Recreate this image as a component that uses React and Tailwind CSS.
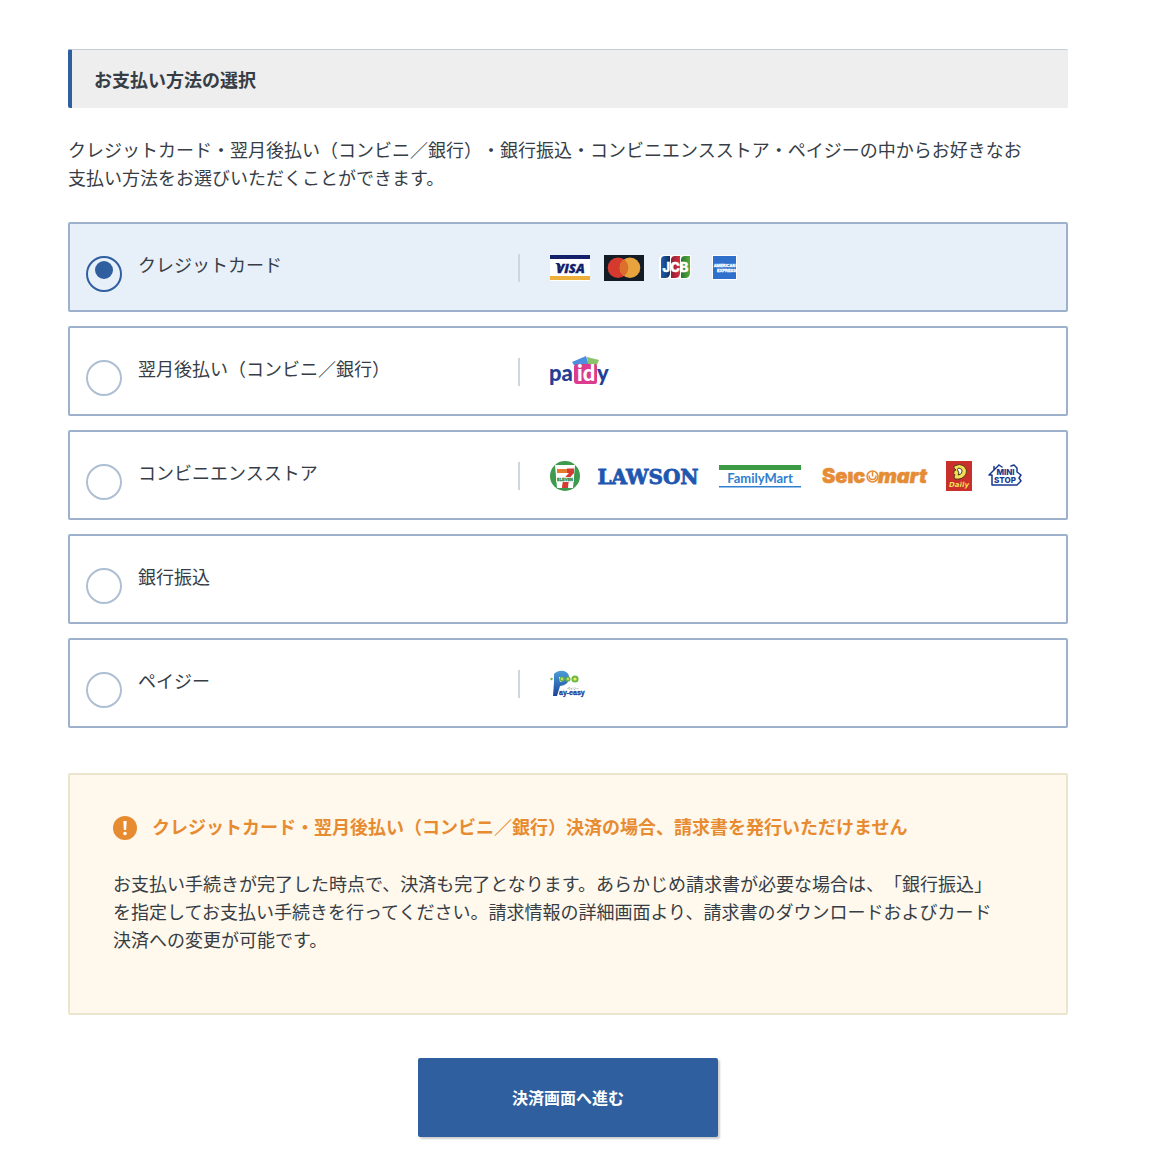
import React, { useState } from "react";

function Visa() {
  return (
    <svg width="40" height="26" viewBox="0 0 40 26" role="img" aria-label="VISA">
      <rect width="40" height="26" fill="#fff" />
      <rect width="40" height="4" fill="#14206b" />
      <rect y="21" width="40" height="4" fill="#edb13b" />
      <path d="M5 8h4l2 4-1 2C9 11 7 9 5 8z" fill="#14206b" />
      <text x="20.5" y="17.500" textAnchor="middle" fontFamily="Open Sans, sans-serif" fontSize="13" fontWeight="800" fontStyle="italic" fill="#14206b" stroke="#14206b" strokeWidth="0.300">VISA</text>
    </svg>
  );
}

function Mastercard() {
  return (
    <svg width="40" height="26" viewBox="0 0 40 26" role="img" aria-label="Mastercard">
      <rect width="40" height="26" fill="#131c26" />
      <circle cx="14" cy="12.7" r="10.3" fill="#d63a2f" />
      <circle cx="26" cy="12.7" r="10.3" fill="#e8a33d" />
      <path d="M20 4.3a10.3 10.3 0 0 1 0 16.8a10.3 10.3 0 0 1 0-16.8z" fill="#dd6f2d" />
    </svg>
  );
}

function Jcb() {
  return (
    <svg width="34" height="26" viewBox="0 0 34 26" role="img" aria-label="JCB">
      <defs>
        <linearGradient id="jcbBlue"><stop stopColor="#1f5fae" /><stop offset="1" stopColor="#152f62" /></linearGradient>
        <linearGradient id="jcbRed"><stop stopColor="#8d1f38" /><stop offset="1" stopColor="#d8303c" /></linearGradient>
        <linearGradient id="jcbGreen"><stop stopColor="#24752f" /><stop offset="1" stopColor="#58ad3c" /></linearGradient>
      </defs>
      <path d="M6 0h27v19q0 5-5 5H1V5q0-5 5-5z" fill="#fff" />
      <path d="M7 1h5v17q0 5-5 5H3V5q0-4 4-4z" fill="url(#jcbBlue)" />
      <path d="M17 1h5v17q0 5-5 5h-4V5q0-4 4-4z" fill="url(#jcbRed)" />
      <path d="M27 1h5v17q0 5-5 5h-4V5q0-4 4-4z" fill="url(#jcbGreen)" />
      <text x="17.5" y="16.500" textAnchor="middle" fontFamily="Inter, sans-serif" fontSize="13" fontWeight="800" fill="#fff" stroke="#fff" strokeWidth="0.400">JCB</text>
    </svg>
  );
}

function Amex() {
  return (
    <svg width="38" height="26" viewBox="0 0 38 26" role="img" aria-label="American Express">
      <rect x="6" y="0" width="25" height="25" fill="#fff" />
      <rect x="7" y="1" width="23" height="23" fill="#2f70cd" />
      <g textAnchor="middle" fontFamily="Liberation Sans, sans-serif" fontSize="4" fontWeight="700" fill="#fff" stroke="#fff" strokeWidth="0.300">
        <text x="18.5" y="11.500">AMERICAN</text>
        <text x="20.5" y="17">EXPRESS</text>
      </g>
    </svg>
  );
}

function Paidy() {
  return (
    <svg width="62" height="32" viewBox="0 0 62 32" role="img" aria-label="paidy">
      <path d="M22 6L36 0l3 9H24z" fill="#4c8fe0" />
      <path d="M37 1l12 3-3 7-8-2z" fill="#8bc36a" />
      <path d="M27 8h18q2 0 2 2v16q0 2-2 2H27q-3 0-3-3V11q0-3 3-3z" fill="#dc3c8e" />
      <g fontFamily="Lato, sans-serif" fontSize="22" fontWeight="900">
        <text x="-1" y="25" fill="#263f95">pa</text>
        <text x="27" y="25" fill="#fff">id</text>
        <text x="47" y="25" fill="#263f95">y</text>
      </g>
    </svg>
  );
}

function SevenEleven() {
  return (
    <svg width="30" height="30" viewBox="0 0 30 30" role="img" aria-label="7-ELEVEN">
      <circle cx="15" cy="15" r="15" fill="#3d9a4e" />
      <path d="M5 4h20l-2 23H7z" fill="#fff" />
      <path d="M7 8h12v4H7z" fill="#e8792d" />
      <path d="M17 7.500h7V12q-6 5-6 15h-6q0-9 7-15h-2z" fill="#d33b34" />
      <rect x="6" y="16" width="18" height="5" fill="#fff" />
      <text x="15" y="20" textAnchor="middle" fontFamily="Liberation Sans, sans-serif" fontSize="4" fontWeight="700" fill="#2c8b45" stroke="#2c8b45" strokeWidth="0.300">ELEVEN</text>
    </svg>
  );
}

function Lawson() {
  return (
    <svg width="104" height="30" viewBox="0 0 104 30" role="img" aria-label="LAWSON">
      <text x="52" y="23" textAnchor="middle" fontFamily="DejaVu Serif, serif" fontSize="20" fontWeight="700" fill="#1f57b0" stroke="#1f57b0" strokeWidth="0.800">LAWSON</text>
    </svg>
  );
}

function FamilyMart() {
  return (
    <svg width="90" height="24" viewBox="0 0 90 24" role="img" aria-label="FamilyMart">
      <rect x="3" y="1" width="82" height="5" fill="#3f9a45" />
      <text x="44" y="19" textAnchor="middle" fontFamily="Lato, sans-serif" fontSize="13" fontWeight="700" fill="#3080d0">FamilyMart</text>
      <rect x="3" y="22" width="82" height="1.500" fill="#3080d0" />
    </svg>
  );
}

function Seicomart() {
  return (
    <svg width="108" height="30" viewBox="0 0 108 30" role="img" aria-label="Seicomart">
      <g fontFamily="Inter, sans-serif" fontSize="20" fontWeight="900" fill="#e58c34" stroke="#e58c34" strokeWidth="0.500">
        <text x="0" y="22">Seıc</text>
        <text x="56" y="22" fontStyle="italic">mart</text>
      </g>
      <circle cx="50.500" cy="15.500" r="5.500" fill="#fff" stroke="#e58c34" strokeWidth="1.500" />
      <path d="M47 14.500q0 4 3.500 4t3.500-4M50.500 10.500v5" fill="none" stroke="#e58c34" strokeWidth="1.500" />
    </svg>
  );
}

function Daily() {
  return (
    <svg width="26" height="30" viewBox="0 0 26 30" role="img" aria-label="Daily">
      <rect width="26" height="30" fill="#c9302c" />
      <path d="M8 5q6-3 10 0 4 4 2 8-3 6-11 5-2-2 0-4-2-1-1-4l2-1q-3-2-2-4z" fill="#f3df55" stroke="#33210f" strokeWidth="0.800" />
      <path d="M13 7q4 1 3 4t-4 3q2-2 0-4t1-3z" fill="#fff" stroke="#33210f" strokeWidth="0.900" />
      <text x="13" y="26" textAnchor="middle" fontFamily="DejaVu Sans, sans-serif" fontSize="7" fontWeight="700" fontStyle="italic" fill="#f3df55">Daily</text>
    </svg>
  );
}

function MiniStop() {
  return (
    <svg width="34" height="26" viewBox="0 0 34 26" role="img" aria-label="MINI STOP">
      <path d="M11 2L1 12h3v10h25l4-4-2-3 2-3-4-3V5l-3-3-3 1M11 2l3 2M6 3.500v3" fill="none" stroke="#17398f" strokeWidth="1.500" strokeLinejoin="round" strokeLinecap="round" />
      <g fontFamily="Inter, sans-serif" fontWeight="800" fill="#17398f" textAnchor="middle">
        <text x="17.500" y="12" fontSize="8">MINI</text>
        <text x="17" y="20" fontSize="8">STOP</text>
      </g>
    </svg>
  );
}

function PayEasy() {
  return (
    <svg width="36" height="30" viewBox="0 0 36 30" role="img" aria-label="Pay-easy">
      <defs>
        <linearGradient id="payBlue" x2="0" y2="1"><stop stopColor="#4a9ed8" /><stop offset="1" stopColor="#1c429c" /></linearGradient>
      </defs>
      <path d="M4 5q4-4 10-3 6 2 5 8-1 6-9 7l-3 10H3L4 13z" fill="url(#payBlue)" />
      <path d="M9 8h5q1 4-4 5z" fill="#fff" />
      <g fill="#6db843">
        <circle cx="1.500" cy="10" r="1.200" />
        <circle cx="12" cy="10" r="2.600" />
        <circle cx="18" cy="10" r="2.600" />
        <circle cx="25" cy="10" r="3.600" />
      </g>
      <g fill="#e9ef62">
        <circle cx="12" cy="10" r="1" />
        <circle cx="18" cy="10" r="1" />
        <circle cx="25" cy="10" r="1.600" />
      </g>
      <text x="17" y="20.500" fontFamily="Noto Sans CJK JP, sans-serif" fontSize="3" fill="#333">ペイジー</text>
      <text x="9" y="26" fontFamily="Liberation Sans, sans-serif" fontSize="7" fontWeight="700" fill="#1c3f95" stroke="#1c3f95" strokeWidth="0.300">ay-easy</text>
    </svg>
  );
}

const methods = [
  { id: "card", label: "クレジットカード", logos: [Visa, Mastercard, Jcb, Amex], gap: "gap-3.5" },
  { id: "paidy", label: "翌月後払い（コンビニ／銀行）", logos: [Paidy], gap: "gap-4" },
  { id: "store", label: "コンビニエンスストア", logos: [SevenEleven, Lawson, FamilyMart, Seicomart, Daily, MiniStop], gap: "gap-4" },
  { id: "bank", label: "銀行振込", logos: [], gap: "gap-4" },
  { id: "payeasy", label: "ペイジー", logos: [PayEasy], gap: "gap-4" },
];

function Method({ method, checked, onSelect }) {
  return (
    <label
      className={
        "flex cursor-pointer items-start rounded-xs border-2 border-[#9db1cd] pt-[26px] pb-[18px] " +
        (checked ? "bg-[#e7eff9]" : "bg-white")
      }
    >
      <span className="flex w-[45%] shrink-0 gap-4 pl-4">
        <input
          type="radio"
          name="method"
          value={method.id}
          checked={checked}
          onChange={onSelect}
          className="mt-[6px] flex size-9 shrink-0 appearance-none justify-center rounded-full border-2 border-[#afbfd3] bg-white pt-[3px] before:size-[18px] before:rounded-full checked:border-[#2f5f9e] checked:bg-transparent checked:before:bg-[#2f5f9e] checked:before:content-['']"
        />
        <span>{method.label}</span>
      </span>
      {method.logos.length > 0 && (
        <span className="mt-1 flex h-7 items-center border-l-2 border-[#ccd7e4] pl-[30px]">
          <span className={"flex items-center " + method.gap}>
            {method.logos.map((Logo, i) => (
              <Logo key={i} />
            ))}
          </span>
        </span>
      )}
    </label>
  );
}

export default function App() {
  const [selected, setSelected] = useState("card");
  return (
    <main className="bg-white pt-[49px] pr-[84px] pb-5 pl-[68px] font-['Noto_Sans_CJK_JP',sans-serif] text-[18px] leading-7 text-[#363d45] [text-spacing-trim:space-all]" lang="ja">
      <h1 className="rounded-xs border-t border-l-4 border-t-[#c5ced8] border-l-[#2f5f9e] bg-[#eeeeee] py-[15px] pl-[22px] font-bold">
        お支払い方法の選択
      </h1>
      <p className="mt-[27px] pr-10">
        クレジットカード・翌月後払い（コンビニ／銀行）・銀行振込・コンビニエンスストア・ペイジーの中からお好きなお支払い方法をお選びいただくことができます。
      </p>
      <form onSubmit={(e) => e.preventDefault()}>
        <div role="radiogroup" aria-label="お支払い方法の選択" className="mt-[31px] flex flex-col gap-3.5">
          {methods.map((m) => (
            <Method key={m.id} method={m} checked={selected === m.id} onSelect={() => setSelected(m.id)} />
          ))}
        </div>
        <section className="mt-[45px] rounded-xs border-2 border-[#ece5cd] bg-[#fff8ec] px-[43px] pt-[37px] pb-[60px]">
          <h2 className="flex items-center gap-[15px] font-bold text-[#e78b31]">
            <svg width="24" height="24" viewBox="0 0 24 24" aria-hidden="true" className="mt-1 shrink-0">
              <circle cx="12" cy="12" r="12" fill="#e78b31" />
              <path d="M10.300 5h3.400l-.6 9h-2.200z" fill="#fff" />
              <circle cx="12" cy="17.500" r="1.800" fill="#fff" />
            </svg>
            クレジットカード・翌月後払い（コンビニ／銀行）決済の場合、請求書を発行いただけません
          </h2>
          <p className="mt-[29px] pr-5">
            お支払い手続きが完了した時点で、決済も完了となります。あらかじめ請求書が必要な場合は、「銀行振込」を指定してお支払い手続きを行ってください。請求情報の詳細画面より、請求書のダウンロードおよびカード決済への変更が可能です。
          </p>
        </section>
        <button
          type="submit"
          className="mx-auto mt-[43px] block w-[300px] cursor-pointer rounded-xs bg-[#2f5f9e] pt-[25px] pb-[26px] text-[16px] leading-7 font-bold text-white shadow-[2px_2px_2px_rgba(0,0,0,0.2)]"
        >
          決済画面へ進む
        </button>
      </form>
    </main>
  );
}
